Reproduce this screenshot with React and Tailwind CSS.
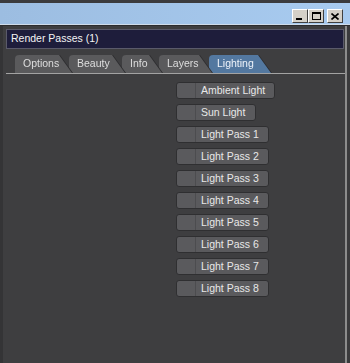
import React from "react";

const tabs = [
  { label: "Options", w: 57 },
  { label: "Beauty", w: 56 },
  { label: "Info", w: 40 },
  { label: "Layers", w: 53 },
  { label: "Lighting", w: 62, active: true },
];

const buttons = [
  { label: "Ambient Light", w: 99 },
  { label: "Sun Light", w: 80 },
  { label: "Light Pass 1", w: 93 },
  { label: "Light Pass 2", w: 93 },
  { label: "Light Pass 3", w: 93 },
  { label: "Light Pass 4", w: 93 },
  { label: "Light Pass 5", w: 93 },
  { label: "Light Pass 6", w: 93 },
  { label: "Light Pass 7", w: 93 },
  { label: "Light Pass 8", w: 93 },
];

function WinBtn({ children }) {
  return (
    <div className="w-[16px] h-[14px] bg-[#d4d0c8] border border-t-white border-l-white border-r-[#404040] border-b-[#404040] flex items-center justify-center">
      {children}
    </div>
  );
}

export default function App() {
  return (
    <div
      className="w-[350px] h-[363px] bg-[#3e3e40] flex flex-col overflow-hidden"
      style={{ fontFamily: '"Liberation Sans", Arial, sans-serif' }}
    >
      <div className="h-[3px] bg-[#3b3b3d]" />
      <div className="h-[21px] bg-gradient-to-r from-[#9cbde1] to-[#a8cbf0] flex items-start justify-end pt-[6px] pr-[7px]">
        <div className="flex">
          <WinBtn>
            <div className="w-[6px] h-[2px] bg-black mt-[6px] -ml-[2px]" />
          </WinBtn>
          <WinBtn>
            <div className="w-[9px] h-[8px] border border-black border-t-2" />
          </WinBtn>
          <div className="w-[3px]" />
          <WinBtn>
            <svg width="8" height="7" viewBox="0 0 8 7">
              <path d="M0.5 0.5 L7.5 6.5 M7.5 0.5 L0.5 6.5" stroke="black" strokeWidth="1.6" />
            </svg>
          </WinBtn>
        </div>
      </div>
      <div className="h-[1px] bg-[#cfdcea]" />
      <div className="h-[1px] bg-[#2c2c2e]" />
      <div className="flex-1 flex">
        <div className="w-[3px] bg-[#343436]" />
        <div className="flex-1 flex flex-col pt-[3px]">
          <div className="ml-[3px] mr-[1px] h-[20px] bg-[#1e1d3b] border border-[#5a5a6a] flex items-center pl-[4px] text-[10.5px] text-[#f4f4f4]">
            Render Passes (1)
          </div>
          <div className="mt-[6px] ml-[12px] flex h-[18px]">
            {tabs.map((t, i) => (
              <div
                key={t.label}
                className={"relative [filter:drop-shadow(1px_0_0_#2c2c2e)]" + (i > 0 ? " -ml-[3px]" : "")}
                style={{ zIndex: 10 - i }}
              >
                <div
                  className={
                    "h-[18px] flex items-center pl-[8px] text-[10.5px] rounded-tl-[4px] [clip-path:polygon(0_0,calc(100%-13px)_0,100%_100%,0_100%)] " +
                    (t.active ? "bg-[#5378a0] text-[#eef3fa]" : "bg-[#5a5a5c] text-[#dedede]")
                  }
                  style={{ width: t.w }}
                >
                  {t.label}
                </div>
              </div>
            ))}
          </div>
          <div className="ml-[3px] h-[1px] bg-[#a3a3a3]" />
          <div className="mt-[8px] ml-[173px] flex flex-col gap-[5px]">
            {buttons.map((b) => (
              <div
                key={b.label}
                className="h-[17px] flex bg-[#5a5a5d] border border-[#2f2f31] rounded-[3px] text-[10.5px] text-[#e8e8e8]"
                style={{ width: b.w }}
              >
                <div className="w-[19px] border-r border-[#4c4c4f]" />
                <div className="pl-[5px] flex items-center leading-none">{b.label}</div>
              </div>
            ))}
          </div>
        </div>
        <div className="w-[2px] bg-[#8c8c8c]" />
        <div className="w-[3px] bg-[#3a3a3c]" />
      </div>
    </div>
  );
}
